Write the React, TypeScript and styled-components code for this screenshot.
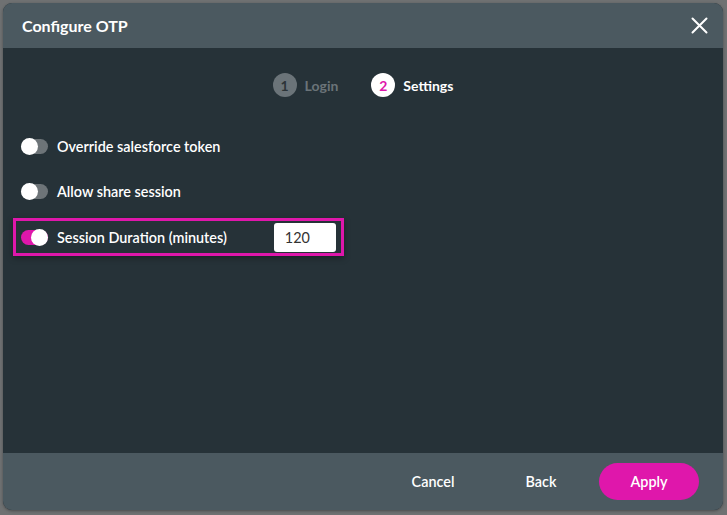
import React, { useState } from "react";
import styled, { createGlobalStyle } from "styled-components";

const GlobalStyle = createGlobalStyle`
  html, body {
    margin: 0;
    padding: 0;
    background: #6f7172;
    font-family: Lato, "Open Sans", sans-serif;
  }
`;

const PINK = "#df17ab";

export default function App() {
  const [override, setOverride] = useState(false);
  const [share, setShare] = useState(false);
  const [duration, setDuration] = useState(true);
  const [minutes, setMinutes] = useState("120");

  return (
    <>
      <GlobalStyle />
      <Backdrop>
        <Modal>
          <Header>
            <Title>Configure OTP</Title>
            <CloseButton aria-label="close">
              <svg width="17" height="17" viewBox="0 0 17 17">
                <path d="M1.5 1.5 L15.5 15.5 M15.5 1.5 L1.5 15.5" stroke="#fff" strokeWidth="2" strokeLinecap="round" />
              </svg>
            </CloseButton>
          </Header>
          <Body>
            <Steps>
              <Step>
                <StepNumber active={false}>1</StepNumber>
                <StepLabel active={false}>Login</StepLabel>
              </Step>
              <Step>
                <StepNumber active={true}>2</StepNumber>
                <StepLabel active={true}>Settings</StepLabel>
              </Step>
            </Steps>
            <Options>
              <OptionRow>
                <Toggle on={override} onClick={() => setOverride(!override)} />
                <OptionLabel>Override salesforce token</OptionLabel>
              </OptionRow>
              <OptionRow>
                <Toggle on={share} onClick={() => setShare(!share)} />
                <OptionLabel>Allow share session</OptionLabel>
              </OptionRow>
              <HighlightRow>
                <Toggle on={duration} onClick={() => setDuration(!duration)} />
                <OptionLabel>Session Duration (minutes)</OptionLabel>
                <NumberInput value={minutes} onChange={e => setMinutes(e.target.value)} />
              </HighlightRow>
            </Options>
          </Body>
          <Footer>
            <TextButton>Cancel</TextButton>
            <TextButton>Back</TextButton>
            <ApplyButton>Apply</ApplyButton>
          </Footer>
        </Modal>
      </Backdrop>
    </>
  );
}

interface ActiveProps {
  active: boolean;
}

interface ToggleProps {
  on: boolean;
}

const Backdrop = styled.div`
  width: 727px;
  height: 515px;
  box-sizing: border-box;
  padding: 3px 4px 5px 3px;
`;

const Modal = styled.div`
  height: 100%;
  display: flex;
  flex-direction: column;
  border-radius: 9px;
  overflow: hidden;
  background: #263238;
  box-shadow: 0 1px 3px rgba(0, 0, 0, 0.35);
`;

const Header = styled.div`
  height: 45px;
  flex: none;
  background: #4b5960;
  display: flex;
  align-items: center;
  justify-content: space-between;
  padding: 0 15px 0 19px;
`;

const Title = styled.div`
  color: #fff;
  font-size: 16px;
  font-weight: 700;
`;

const CloseButton = styled.button`
  background: none;
  border: none;
  padding: 0;
  display: flex;
  cursor: pointer;
`;

const Body = styled.div`
  flex: 1;
  display: flex;
  flex-direction: column;
`;

const Steps = styled.div`
  display: flex;
  justify-content: center;
  gap: 33px;
  padding: 25px 0 0 0;
`;

const Step = styled.div`
  display: flex;
  align-items: center;
  gap: 8px;
`;

const StepNumber = styled.span<ActiveProps>`
  width: 24px;
  height: 24px;
  border-radius: 50%;
  display: flex;
  align-items: center;
  justify-content: center;
  font-size: 14px;
  font-weight: 700;
  background: ${p => (p.active ? "#fff" : "#6b7479")};
  color: ${p => (p.active ? PINK : "#2c3438")};
`;

const StepLabel = styled.span<ActiveProps>`
  font-size: 14px;
  font-weight: 700;
  color: ${p => (p.active ? "#fff" : "#6b7479")};
`;

const Options = styled.div`
  display: flex;
  flex-direction: column;
  align-items: flex-start;
  padding: 30px 0 0 10px;
  gap: 7px;
`;

const OptionRow = styled.div`
  display: flex;
  align-items: center;
  gap: 9px;
  height: 38px;
  padding: 0 0 0 8px;
`;

const HighlightRow = styled(OptionRow)`
  border: 3px solid ${PINK};
  padding: 0 5px 0 5px;
  height: 32px;
  margin-top: 1px;
  box-shadow: 0 2px 6px rgba(0, 0, 0, 0.35);
`;

const Toggle = styled.button<ToggleProps>`
  position: relative;
  width: 27px;
  height: 15px;
  border-radius: 8px;
  border: none;
  padding: 0;
  cursor: pointer;
  background: ${p => (p.on ? PINK : "#6d7478")};

  &:after {
    content: "";
    position: absolute;
    top: -1px;
    left: ${p => (p.on ? "10px" : "0")};
    width: 17px;
    height: 17px;
    border-radius: 50%;
    background: #fff;
  }
`;

const OptionLabel = styled.span`
  color: #fff;
  font-size: 14.4px;
  font-weight: 600;
`;

const NumberInput = styled.input`
  margin-left: 38px;
  width: 62px;
  height: 29px;
  box-sizing: border-box;
  border: none;
  border-radius: 3px;
  padding: 0 0 0 11px;
  font-family: Lato, sans-serif;
  font-size: 14.4px;
  color: #333;
  background: #fff;
  outline: none;
`;

const Footer = styled.div`
  height: 57px;
  flex: none;
  background: #4b5960;
  display: flex;
  align-items: center;
  justify-content: flex-end;
  padding: 0 24px 0 0;
`;

const TextButton = styled.button`
  background: none;
  border: none;
  color: #fff;
  font-family: Lato, sans-serif;
  font-size: 14.4px;
  font-weight: 600;
  width: 108px;
  height: 37px;
  cursor: pointer;
`;

const ApplyButton = styled.button`
  margin-left: 4px;
  width: 100px;
  height: 37px;
  border: none;
  border-radius: 19px;
  background: ${PINK};
  color: #fff;
  font-family: Lato, sans-serif;
  font-size: 14.4px;
  font-weight: 600;
  cursor: pointer;
`;
